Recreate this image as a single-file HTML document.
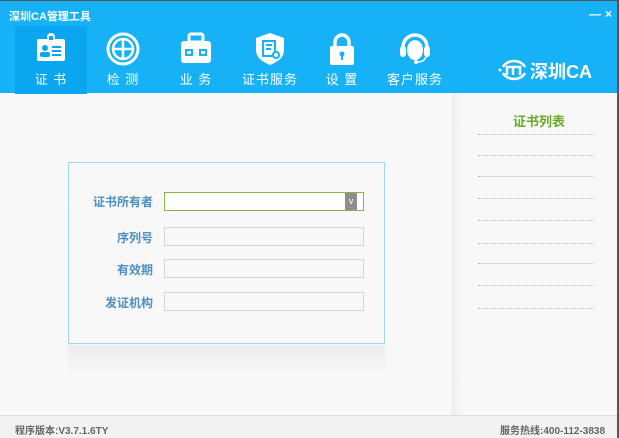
<!DOCTYPE html>
<html><head><meta charset="utf-8"><style>
*{margin:0;padding:0;box-sizing:border-box}
body{width:619px;height:438px;overflow:hidden;background:#f8f8f8;font-family:"Liberation Sans","Noto Sans CJK SC",sans-serif;position:relative}
.hdr{position:absolute;left:0;top:0;width:619px;height:93px;background:#16b1f6;border-top:1px solid #555}
.title{position:absolute;left:9px;top:7px;color:#fff;font-size:11px;font-weight:bold}
.ctl{position:absolute;top:6px;color:#fff;font-size:12px;font-weight:bold}
.tab{position:absolute;top:25px;height:68px;width:72px;text-align:center;color:#fff;font-size:13px}
.tab.sel{background:#0aa6ef}
.tab svg{position:absolute;left:50%;margin-left:-18px;top:5px}
.tab span{position:absolute;left:0;right:0;top:45px;line-height:18px;letter-spacing:1px}
.logo{position:absolute;top:57px;color:#fff;font-size:18px;font-weight:bold}
.box{position:absolute;left:68px;top:162px;width:317px;height:182px;border:1px solid #9fd6f3;background:#f8f8f8}
.shadow{position:absolute;left:68px;top:345px;width:317px;height:30px;background:linear-gradient(#ececec,#f8f8f8)}
.lbl{position:absolute;width:90px;text-align:right;left:63px;font-size:12px;font-weight:bold;color:#4f8fbf}
.inp{position:absolute;left:164px;width:200px;height:19px;border:1px solid #d4d4d4;background:#f8f8f8}
.side{position:absolute;left:452px;top:93px;width:165px;height:323px;background:#f8f8f8}
.sshadow{position:absolute;left:452px;top:93px;width:12px;height:323px;background:linear-gradient(90deg,#efefef,#f8f8f8)}
.dl{position:absolute;left:478px;width:116px;border-top:1px dotted #bbb}
.foot{position:absolute;left:0;top:415px;width:617px;height:23px;background:#f2f2f2;border-top:1px solid #ddd;font-size:10px;font-weight:bold;color:#666}
.rb{position:absolute;right:0;top:0;width:2px;height:438px;background:#555}
</style></head><body>
<div class="hdr">
<div class="title">深圳CA管理工具</div>
<div class="ctl" style="left:589px">—</div><div class="ctl" style="left:605px">×</div>
<div class="tab sel" style="left:15px"><svg width="36" height="36" viewBox="0 0 36 36"><rect x="4" y="8" width="28" height="22" rx="2" fill="#fff"/><circle cx="18" cy="6" r="4" fill="#fff"/><rect x="16" y="5" width="4" height="4" fill="#0aa6ef"/><circle cx="12" cy="17" r="3" fill="#0aa6ef"/><rect x="7" y="21" width="10" height="5" rx="2" fill="#0aa6ef"/><rect x="19" y="15" width="9" height="2" fill="#0aa6ef"/><rect x="19" y="19" width="9" height="2" fill="#0aa6ef"/><rect x="19" y="23" width="9" height="2" fill="#0aa6ef"/></svg><span>证 书</span></div>
<div class="tab" style="left:87px"><svg width="36" height="36" viewBox="0 0 36 36" fill="none" stroke="#fff"><circle cx="18" cy="18" r="15" stroke-width="3"/><circle cx="18" cy="18" r="10" stroke-width="2.5"/><path d="M18 8V28M8 18H28" stroke-width="2.5"/></svg><span>检 测</span></div>
<div class="tab" style="left:160px"><svg width="36" height="36" viewBox="0 0 36 36"><rect x="11" y="3" width="14" height="8" rx="2" fill="none" stroke="#fff" stroke-width="3"/><rect x="3" y="10" width="30" height="22" rx="3" fill="#fff"/><rect x="7" y="18" width="8" height="7" fill="#16b1f6"/><rect x="21" y="18" width="8" height="7" fill="#16b1f6"/><rect x="9" y="20" width="4" height="3" fill="#fff"/><rect x="23" y="20" width="4" height="3" fill="#fff"/></svg><span>业 务</span></div>
<div class="tab" style="left:234px"><svg width="36" height="36" viewBox="0 0 36 36"><path d="M18 2L32 7V19C32 27 25 31 18 34C11 31 4 27 4 19V7Z" fill="#fff"/><rect x="11" y="10" width="12" height="15" fill="none" stroke="#16b1f6" stroke-width="2"/><path d="M14 14H20M14 18H19" stroke="#16b1f6" stroke-width="2"/><circle cx="24" cy="24" r="4" fill="#16b1f6"/><circle cx="24" cy="24" r="2" fill="#fff"/></svg><span>证书服务</span></div>
<div class="tab" style="left:306px"><svg width="36" height="36" viewBox="0 0 36 36"><path d="M11 16V11A7 7 0 0 1 25 11V16" fill="none" stroke="#fff" stroke-width="3.5"/><rect x="6" y="15" width="24" height="19" rx="2" fill="#fff"/><circle cx="18" cy="23" r="2.5" fill="#16b1f6"/><rect x="17" y="24" width="2" height="5" fill="#16b1f6"/></svg><span>设 置</span></div>
<div class="tab" style="left:379px"><svg width="36" height="36" viewBox="0 0 36 36"><path d="M6 22V16A12 12 0 0 1 30 16V22" fill="none" stroke="#fff" stroke-width="3.5"/><ellipse cx="18" cy="19" rx="8" ry="10" fill="#fff"/><rect x="3" y="15" width="6" height="11" rx="3" fill="#fff"/><rect x="27" y="15" width="6" height="11" rx="3" fill="#fff"/><path d="M29 25Q28 31 20 31" fill="none" stroke="#fff" stroke-width="1.5"/><circle cx="19" cy="31" r="2" fill="#fff"/></svg><span>客户服务</span></div>
<svg style="position:absolute;left:497px;top:57px" width="34" height="24" viewBox="0 0 34 24"><path d="M6 9A12 10 0 0 1 28 9M6 15A12 10 0 0 0 28 15" fill="none" stroke="#fff" stroke-width="2.5"/><circle cx="3" cy="12" r="1.5" fill="#fff"/><path d="M10 17V9H23V17M16 9V17" fill="none" stroke="#fff" stroke-width="2.5"/></svg>
<div class="logo" style="left:530px">深圳CA</div>
</div>
<div class="box"></div><div class="shadow"></div>
<div class="lbl" style="top:193px">证书所有者</div>
<div class="inp" style="top:192px;border-color:#8bb14f;background:#fff"><div style="position:absolute;right:6px;top:0;width:12px;height:17px;background:#8e8e8e;color:#fff;font-size:9px;text-align:center;line-height:16px">v</div></div>
<div class="lbl" style="top:229px">序列号</div><div class="inp" style="top:227px"></div>
<div class="lbl" style="top:261px">有效期</div><div class="inp" style="top:259px"></div>
<div class="lbl" style="top:294px">发证机构</div><div class="inp" style="top:292px"></div>
<div class="side"></div><div class="sshadow"></div>
<div style="position:absolute;left:513px;top:111px;font-size:13px;font-weight:bold;color:#6aac2c">证书列表</div>
<div class="dl" style="top:134px"></div><div class="dl" style="top:155px"></div><div class="dl" style="top:176px"></div><div class="dl" style="top:198px"></div><div class="dl" style="top:220px"></div><div class="dl" style="top:243px"></div><div class="dl" style="top:263px"></div><div class="dl" style="top:285px"></div><div class="dl" style="top:308px"></div>
<div class="foot"><span style="position:absolute;left:15px;top:6px">程序版本:V3.7.1.6TY</span><span style="position:absolute;left:500px;top:6px">服务热线:400-112-3838</span></div>
<div class="rb"></div>
</body></html>
